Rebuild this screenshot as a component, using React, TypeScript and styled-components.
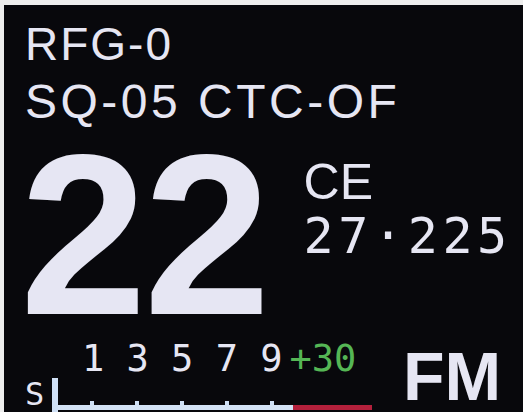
import React from "react";
import styled, { createGlobalStyle } from "styled-components";

const GlobalStyle = createGlobalStyle`
  html, body {
    margin: 0;
    padding: 0;
    background: #f2f2f2;
  }
  body {
    width: 523px;
    height: 412px;
    overflow: hidden;
  }
`;

const Bezel = styled.div`
  width: 523px;
  height: 412px;
  box-sizing: border-box;
  padding: 5px 0 0 4px;
  background: #eeeeee;
`;

const Screen = styled.div`
  height: 100%;
  box-sizing: border-box;
  background: #08080c;
  padding: 10px 0 0 21px;
  display: flex;
  flex-direction: column;
  color: #e6e6f3;
  font-family: "Liberation Sans", Arial, sans-serif;
  overflow: hidden;
`;

const StatusLine = styled.div<{ $size: number; $lh: number; $spacing: number }>`
  font-size: ${(p) => p.$size}px;
  line-height: ${(p) => p.$lh}px;
  letter-spacing: ${(p) => p.$spacing}px;
  white-space: nowrap;
`;

const ChannelRow = styled.div`
  display: flex;
  align-items: flex-start;
  margin-top: 9px;
`;

const Channel = styled.div`
  font-weight: 700;
  font-size: 228px;
  line-height: 190px;
  letter-spacing: -3px;
  margin-left: -5px;
`;

const FreqBlock = styled.div`
  display: flex;
  flex-direction: column;
  margin-left: 36px;
  margin-top: 15px;
`;

const Band = styled.div`
  font-size: 50px;
  line-height: 55px;
`;

const Freq = styled.div`
  font-family: "DejaVu Sans Mono", monospace;
  font-size: 50px;
  line-height: 52px;
  letter-spacing: 4.6px;
`;

const BottomRow = styled.div`
  display: flex;
  align-items: flex-end;
  margin-top: auto;
`;

const Meter = styled.div`
  display: flex;
  flex-direction: column;
  width: 347px;
`;

const Scale = styled.div`
  font-family: "DejaVu Sans Mono", monospace;
  font-size: 37px;
  line-height: 38px;
  padding-left: 57px;
  white-space: pre;
`;

const Plus = styled.span`
  color: #55b655;
  margin-left: 7px;
`;

const MeterBody = styled.div`
  display: flex;
  align-items: flex-end;
  height: 34px;
`;

const SLabel = styled.div`
  font-family: "DejaVu Sans Mono", monospace;
  font-size: 32px;
  line-height: 30px;
  width: 27px;
  margin-bottom: 3px;
`;

const Bar = styled.div`
  position: relative;
  flex: 1;
  height: 100%;
  border-left: 6px solid #cfe0f6;
`;

const BarFill = styled.div`
  position: absolute;
  left: 0;
  right: 0;
  bottom: 2px;
  height: 5px;
  background: linear-gradient(
    to right,
    #d4e3f6 0,
    #d4e3f6 235px,
    #b3203c 235px,
    #b3203c 100%
  );
`;

const Tick = styled.div`
  position: absolute;
  bottom: 7px;
  width: 4px;
  height: 4px;
  background: #cfe0f6;
`;

const Mode = styled.div`
  font-weight: 700;
  font-size: 68px;
  line-height: 60px;
  margin-left: 31px;
  margin-bottom: 6px;
`;

const ticks = [32, 77, 122, 167, 212];

export default function App() {
  return (
    <>
      <GlobalStyle />
      <Bezel>
        <Screen>
          <StatusLine $size={46} $lh={58} $spacing={2}>
            RFG-0
          </StatusLine>
          <StatusLine $size={48} $lh={58} $spacing={3.5}>
            SQ-05 CTC-OF
          </StatusLine>
          <ChannelRow>
            <Channel>22</Channel>
            <FreqBlock>
              <Band>CE</Band>
              <Freq>27·225</Freq>
            </FreqBlock>
          </ChannelRow>
          <BottomRow>
            <Meter>
              <Scale>
                1 3 5 7 9<Plus>+30</Plus>
              </Scale>
              <MeterBody>
                <SLabel>S</SLabel>
                <Bar>
                  {ticks.map((x) => (
                    <Tick key={x} style={{ left: x }} />
                  ))}
                  <BarFill />
                </Bar>
              </MeterBody>
            </Meter>
            <Mode>FM</Mode>
          </BottomRow>
        </Screen>
      </Bezel>
    </>
  );
}
